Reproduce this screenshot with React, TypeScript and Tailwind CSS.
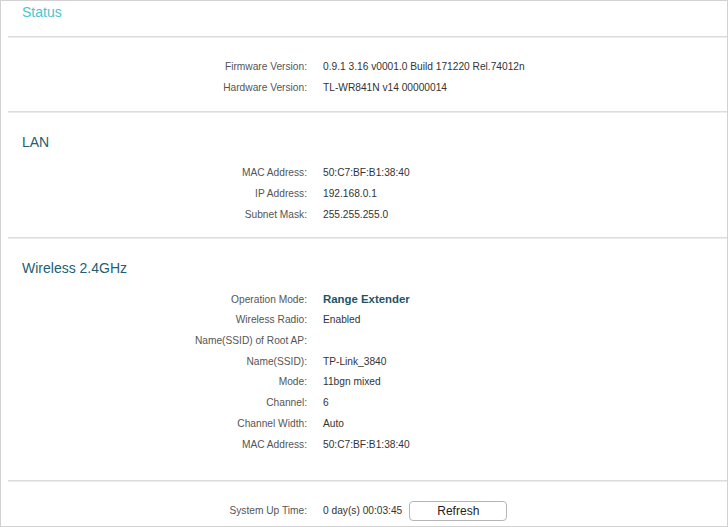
import React from "react";

const font = { fontFamily: '"Liberation Sans", Arial, sans-serif' };

function Row({ label, children, bold, h = "h-[21px]" }: { label: string; children?: React.ReactNode; bold?: boolean; h?: string }) {
  return (
    <div className={"flex items-center " + h}>
      <div className="w-[306px] shrink-0 text-right text-[10.2px] text-[#555555]">{label}</div>
      <div className={"ml-[16px] " + (bold ? "font-bold text-[11.4px] text-[#1d5467]" : "text-[10.2px] text-[#333333]")}>{children}</div>
    </div>
  );
}

function Divider() {
  return <div className="ml-[7px] h-[2px] border-t border-[#dcdcdc] bg-[#ececec]" />;
}

export default function App() {
  const w = "h-[20.7px]";
  return (
    <div style={font} className="h-[527px] w-[728px] overflow-hidden border border-[#d2d2d2] bg-white">
      <div className="h-[35px] pl-[21px] pt-[3px]">
        <div className="text-[14px] leading-[16px] text-[#4cc3d1]">Status</div>
      </div>
      <Divider />
      <div className="pt-[18px] pb-[13px]">
        <Row label="Firmware Version:">0.9.1 3.16 v0001.0 Build 171220 Rel.74012n</Row>
        <Row label="Hardware Version:">TL-WR841N v14 00000014</Row>
      </div>
      <Divider />
      <div className="pt-[21px] pb-[12px]">
        <div className="mb-[12px] pl-[21px] text-[14px] leading-[16px] text-[#245e71]">LAN</div>
        <Row label="MAC Address:">50:C7:BF:B1:38:40</Row>
        <Row label="IP Address:">192.168.0.1</Row>
        <Row label="Subnet Mask:">255.255.255.0</Row>
      </div>
      <Divider />
      <div className="h-[241px] pt-[21px]">
        <div className="mb-[13px] pl-[21px] text-[14px] leading-[16px] text-[#245e71]">Wireless 2.4GHz</div>
        <Row h={w} label="Operation Mode:" bold>Range Extender</Row>
        <Row h={w} label="Wireless Radio:">Enabled</Row>
        <Row h={w} label="Name(SSID) of Root AP:"></Row>
        <Row h={w} label="Name(SSID):">TP-Link_3840</Row>
        <Row h={w} label="Mode:">11bgn mixed</Row>
        <Row h={w} label="Channel:">6</Row>
        <Row h={w} label="Channel Width:">Auto</Row>
        <Row h={w} label="MAC Address:">50:C7:BF:B1:38:40</Row>
      </div>
      <Divider />
      <div className="pt-[19px]">
        <div className="flex h-[20px] items-center">
          <div className="w-[306px] shrink-0 text-right text-[10.2px] text-[#555555]">System Up Time:</div>
          <div className="ml-[16px] text-[10.2px] text-[#333333]">0 day(s) 00:03:45</div>
          <button className="ml-[7px] h-[20px] w-[98px] rounded-[4px] border border-[#b5b5b5] bg-white text-[12px] text-[#222222]">
            Refresh
          </button>
        </div>
      </div>
    </div>
  );
}
